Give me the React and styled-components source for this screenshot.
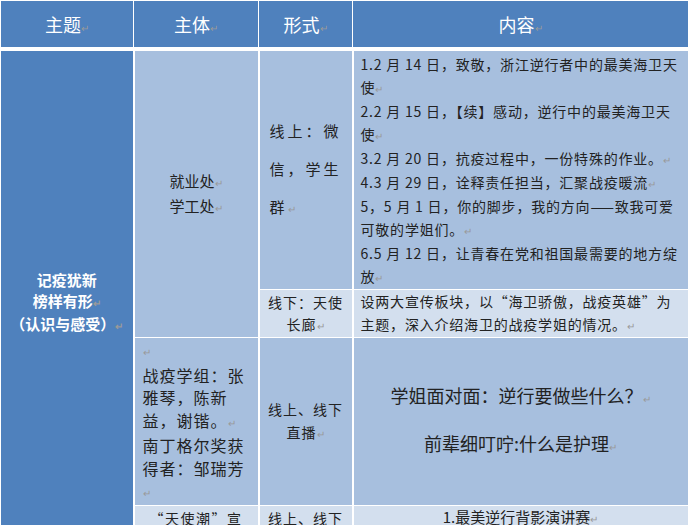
import React from "react";
import styled, { createGlobalStyle } from "styled-components";

const Global = createGlobalStyle`
  html, body { margin: 0; padding: 0; background: #fff; }
  body { font-family: "Noto Sans CJK SC", "Noto Sans", sans-serif; }
`;

const Table = styled.table`
  width: 688px;
  height: 525px;
  border-collapse: collapse;
  table-layout: fixed;
  color: #222;
`;

const shades = { dark: "#4f81bd", mid: "#a7bfde", light: "#d3dfee" };

const Th = styled.th`
  background: ${shades.dark};
  color: #fff;
  font-weight: 400;
  font-size: 18px;
  height: 46px;
  border: 1px solid #fff;
  border-bottom: 4px solid #fff;
  padding: 0;
`;

const Td = styled.td`
  background: ${(p) => shades[p.$shade || "mid"]};
  border: 1px solid #fff;
  border-width: 1px 2px 1px 1px;
  font-size: ${(p) => p.$size || 14}px;
  line-height: ${(p) => p.$lh || 23}px;
  letter-spacing: ${(p) => p.$ls || 0}px;
  text-align: ${(p) => p.$align || "left"};
  vertical-align: ${(p) => p.$valign || "middle"};
  padding: ${(p) => p.$pad || "0 6px"};
  color: ${(p) => (p.$shade === "dark" ? "#fff" : "#222")};
  font-weight: ${(p) => (p.$bold ? 700 : 400)};
  height: ${(p) => (p.$h ? p.$h + "px" : "auto")};
  overflow: hidden;
`;

const Mark = styled.span`
  color: #999;
  font-size: 10px;
  letter-spacing: 0;
`;

const Line = styled.div``;

const M = () => <Mark>↵</Mark>;

export default function App() {
  return (
    <>
      <Global />
      <Table>
        <colgroup>
          <col style={{ width: 133 }} />
          <col style={{ width: 125 }} />
          <col style={{ width: 94 }} />
          <col style={{ width: 336 }} />
        </colgroup>
        <thead>
          <tr>
            <Th>主题<M /></Th>
            <Th>主体<M /></Th>
            <Th>形式<M /></Th>
            <Th>内容<M /></Th>
          </tr>
        </thead>
        <tbody>
          <tr>
            <Td rowSpan={4} $shade="dark" $align="center" $bold $size={15} $lh={21} $pad="0 2px">
              记疫犹新<br />榜样有形<M /><br />（认识与感受）<M />
            </Td>
            <Td rowSpan={2} $align="center" $size={15} $lh={23}>就业处<M /><br />学工处<M /></Td>
            <Td $h={238} $size={15} $lh={38} $ls={3} $pad="0 4px 0 10px">线上：微信，学生群<M /></Td>
            <Td $pad="2px 4px 0 7px" $size={14} $ls={0.8} $valign="top">
              <Line>1.2 月 14 日，致敬，浙江逆行者中的最美海卫天使<M /></Line>
              <Line>2.2 月 15 日，【续】感动，逆行中的最美海卫天使<M /></Line>
              <Line>3.2 月 20 日，抗疫过程中，一份特殊的作业。<M /></Line>
              <Line>4.3 月 29 日，诠释责任担当，汇聚战疫暖流<M /></Line>
              <Line>5，5 月 1 日，你的脚步，我的方向——致我可爱可敬的学姐们。<M /></Line>
              <Line>6.5 月 12 日，让青春在党和祖国最需要的地方绽放<M /></Line>
            </Td>
          </tr>
          <tr>
            <Td $shade="light" $h={47} $align="center" $size={14} $ls={1} $lh={22} $pad="0 4px">线下：天使长廊<M /></Td>
            <Td $shade="light" $size={14} $ls={0.8} $lh={23} $pad="0 4px 0 7px">
              设两大宣传板块，以“海卫骄傲，战疫英雄”为主题，深入介绍海卫的战疫学姐的情况。<M />
            </Td>
          </tr>
          <tr>
            <Td $h={139} $size={16} $ls={1} $lh={22.5} $pad="0 6px 0 8px"><M /><br />战疫学组：张雅琴，陈新益，谢锴。<M /><br />南丁格尔奖获得者：邹瑞芳<M /></Td>
            <Td $align="center" $size={14} $ls={1} $lh={23} $pad="0 4px">线上、线下直播<M /></Td>
            <Td $align="center" $size={18} $lh={44}>
              <Line>学姐面对面：逆行要做些什么？<M /></Line>
              <Line>前辈细叮咛:什么是护理<M /></Line>
            </Td>
          </tr>
          <tr>
            <Td $shade="light" $h={46} $align="center" $size={14} $ls={1.5} $lh={22} $pad="0 8px">“天使潮”宣讲团<M /></Td>
            <Td $shade="light" $align="center" $size={14} $ls={1} $lh={22} $pad="0 4px">线上、线下直播<M /></Td>
            <Td $shade="light" $align="center" $size={15} $lh={22}>
              <Line>1.最美逆行背影演讲赛<M /></Line>
              <Line>2.我眼中的学姐，道德讲堂<M /></Line>
            </Td>
          </tr>
        </tbody>
      </Table>
    </>
  );
}
